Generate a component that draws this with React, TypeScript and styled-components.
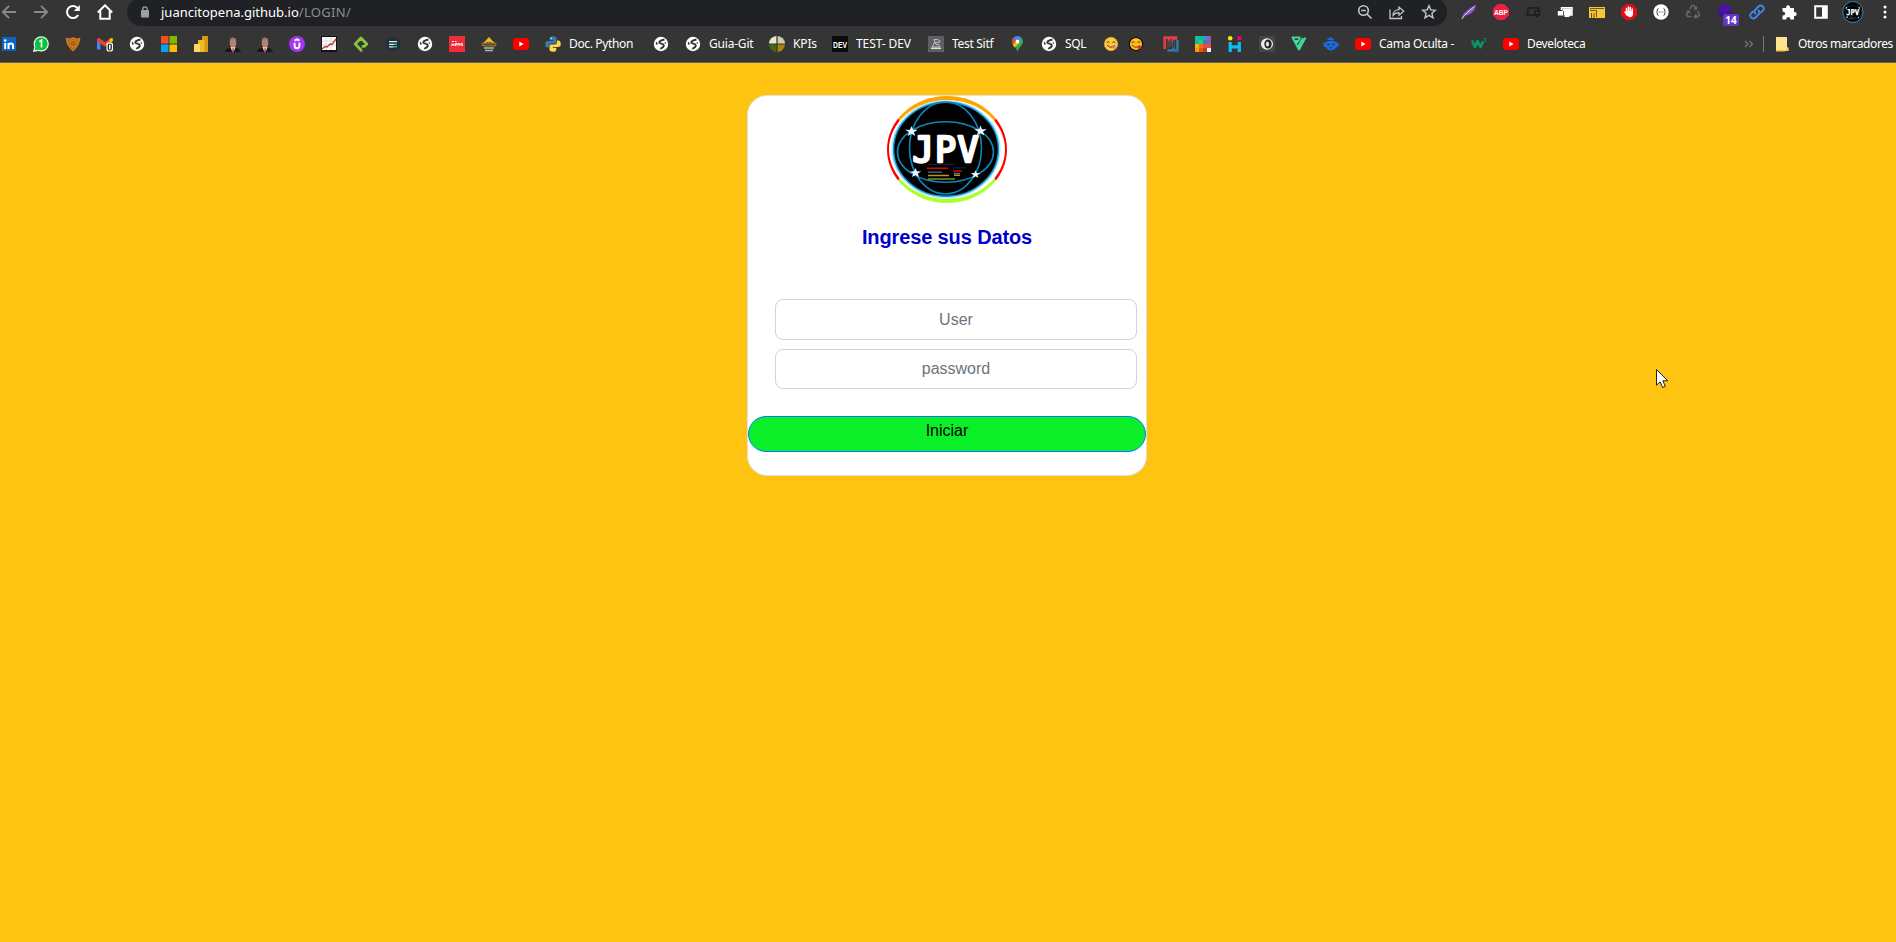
import React from 'react';
import styled, { createGlobalStyle } from 'styled-components';

const GlobalStyle = createGlobalStyle`
  * { box-sizing: border-box; }
  html, body { margin: 0; height: 100%; overflow: hidden; }
  body { background: #ffc312; font-family: "Liberation Sans", Arial, sans-serif; }
  #root { height: 100%; }
`;

const Page = styled.div`
  display: flex;
  flex-direction: column;
  height: 942px;
  width: 1896px;
  overflow: hidden;
  background: #ffc312;
`;

const Chrome = styled.header`
  height: 63px;
  background: #353535;
  border-bottom: 1px solid #636363;
  font-family: "Noto Sans", "Open Sans", sans-serif;
  color: #fff;
`;

const Toolbar = styled.div`
  display: flex;
  height: 26px;
`;

const NavButtons = styled.nav`
  display: flex;
  flex: none;
  align-items: center;
  gap: 16px;
  width: 127px;
  padding: 0 0 2px 1px;
`;

const AddressBar = styled.div`
  display: flex;
  flex: none;
  align-items: center;
  width: 1320px;
  height: 28px;
  margin-top: -2px;
  padding: 0 10px 0 14px;
  border-radius: 14px;
  background: #202124;
`;

const Url = styled.div`
  flex: 1;
  display: flex;
  margin-left: 12px;
  font-size: 13px;
  line-height: 20px;
  letter-spacing: 0;
  white-space: pre;
`;

const UrlPath = styled.span`
  color: #9aa0a6;
  letter-spacing: 0.3px;
  opacity: 0.85;
`;

const OmniActions = styled.div`
  display: flex;
  gap: 16px;
`;

const Extensions = styled.div`
  display: flex;
  flex: none;
  align-items: center;
  padding: 0 0 2px 6px;
`;

const ExtensionSlot = styled.div`
  position: relative;
  display: flex;
  flex: none;
  justify-content: center;
  width: 32px;
`;

const Badge = styled.span`
  position: absolute;
  left: 14px;
  top: 10px;
  width: 16px;
  height: 12px;
  border-radius: 2px;
  background: #6a35c4;
  color: #fff;
  font: bold 10px/12px "Open Sans", sans-serif;
  text-align: center;
`;

const Bookmarks = styled.div`
  display: flex;
  align-items: center;
  gap: 16px;
  height: 36px;
  padding: 0 2px 0 1px;
`;

const Bookmark = styled.a`
  display: flex;
  align-items: center;
  gap: 8px;
  flex: none;
`;

const Label = styled.span<{ $w: number; $ls?: number }>`
  width: ${(p) => p.$w}px;
  font-size: 12px;
  line-height: 16px;
  letter-spacing: ${(p) => p.$ls ?? -0.3}px;
  white-space: nowrap;
`;

const EmojiPair = styled.div`
  display: flex;
  gap: 9px;
  width: 44px;
`;

const Overflow = styled.div`
  display: flex;
  align-items: center;
  margin-left: auto;
  gap: 9px;
`;

const Separator = styled.i`
  width: 1px;
  height: 16px;
  background: #777;
`;

const FolderLink = styled.a`
  display: flex;
  align-items: center;
  gap: 7px;
  margin-left: 2px;
`;

const Main = styled.main`
  flex: 1;
  padding: 32px 0 0 747px;
`;

const Card = styled.form`
  display: flex;
  flex-direction: column;
  align-items: center;
  width: 400px;
  height: 381px;
  border: 1px solid #dfdfdf;
  border-radius: 20px;
  background: #fff;
`;

const LogoFrame = styled.div`
  width: 120px;
  height: 107px;
  border: solid;
  border-width: 4px 2px;
  border-color: orange red greenyellow;
  border-radius: 50%;
`;

const Title = styled.h1`
  margin: 22px 0 0;
  font-size: 20px;
  line-height: 24px;
  font-weight: bold;
  letter-spacing: -0.12px;
  color: #0000cd;
`;

const Fields = styled.div`
  display: flex;
  flex-direction: column;
  gap: 9px;
  width: 362px;
  margin: 50px 0 0 18px;
`;

const Field = styled.input<{ $h: number }>`
  height: ${(p) => p.$h}px;
  padding: 0;
  border: 1px solid #ced4da;
  border-radius: 8px;
  background: #fff;
  font: 16px "Liberation Sans", Arial, sans-serif;
  text-align: center;
  outline: none;
  &::placeholder { color: #6c757d; opacity: 1; }
`;

const Submit = styled.button`
  width: 398px;
  height: 36px;
  margin-top: 27px;
  padding: 0 0 6px;
  border: 1px solid #007bff;
  border-radius: 18px;
  background: #0bef28;
  color: #000;
  font: 16px/24px "Liberation Sans", Arial, sans-serif;
`;

const Pointer = styled.svg`
  position: absolute;
  left: 1655px;
  top: 368px;
`;

const Svg = styled.svg`
  display: block;
  flex: none;
`;

const Glyph = ({ size = 16, children }: { size?: number; children: React.ReactNode }) => (
  <Svg width={size} height={size} viewBox="0 0 16 16" fill="none">{children}</Svg>
);

const STARS: [number, number, number][] = [[911.5, 131.5, 6.5], [980.5, 131, 6.5], [915.5, 173, 6], [975.5, 174.5, 5]];

const starPath = (cx: number, cy: number, r: number) => {
  const pts = [];
  for (let i = 0; i < 10; i++) {
    const a = -Math.PI / 2 + (i * Math.PI) / 5;
    const k = i % 2 ? r * 0.4 : r;
    pts.push(`${(cx + Math.cos(a) * k).toFixed(1)} ${(cy + Math.sin(a) * k * 0.85).toFixed(1)}`);
  }
  return `M${pts.join('L')}Z`;
};

const Emblem = ({ w, h }: { w: number; h: number }) => (
  <Svg width={w} height={h} viewBox="889 100 116 99" preserveAspectRatio="none" fill="none">
    <ellipse cx="946" cy="149.300" rx="53.500" ry="48" fill="#000" stroke="#a8e6fb" strokeWidth="2" />
    <ellipse cx="946" cy="149.300" rx="52.400" ry="47" stroke="#0a9ad6" strokeWidth="1.400" />
    <g stroke="#0b86be" strokeWidth="1.600">
      <ellipse cx="945.500" cy="148" rx="36" ry="46" />
      <ellipse cx="945.500" cy="152" rx="48" ry="30.300" />
    </g>
    <text x="945.500" y="161.500" textAnchor="middle" fontFamily="DejaVu Sans Mono" fontSize="35" textLength="66" fill="#fff" stroke="#fff" strokeWidth="2.600" strokeLinejoin="round">JPV</text>
    {STARS.map(([x, y, r]) => <path key={x} d={starPath(x, y, r)} fill="#eef6ff" />)}
    <g strokeWidth="1.600">
      <path d="M928 164.500h27M953 167.800h12" stroke="#0c1c4c" strokeWidth="1.200" />
      <path d="M927 168.200h21M953 171h9" stroke="#dc0000" />
      <path d="M928 172.200h14M954 173.300h6" stroke="#4a6fae" strokeWidth="1.300" />
      <path d="M928 175.500h21M954 175.300h6" stroke="#c09410" />
      <path d="M928 179h27" stroke="#67912a" />
    </g>
  </Svg>
);

const Globe = () => (
  <Glyph>
    <circle cx="8" cy="8" r="7.200" fill="#fff" />
    <path d="M11.500 3.500C9 4 6.500 4.500 6.200 6.300c0 1.800 4.600 1 4.600 3.200C10.800 11.300 9 12 7.300 12.800" stroke="#353535" strokeWidth="1.900" />
    <path d="M3 5.500l1.700 1.800-.3 1.700-1.600-.7zM12.300 6l1 1.500-.8.500-1.200-1.200z" fill="#353535" />
  </Glyph>
);

const YouTube = () => (
  <Glyph>
    <rect y="2" width="16" height="12" rx="3" fill="#f00" />
    <path d="M6.300 5.600v4.800L10.600 8z" fill="#fff" />
  </Glyph>
);

const Businessman = () => (
  <Glyph>
    <path d="M0 16c0-2 2-3.400 4.500-4L8 11l3.500 1C14 12.600 16 14 16 16z" fill="#15171b" />
    <path d="M5.500 11h5L8.600 16H7.400z" fill="#e9e9ec" />
    <path d="M7.600 12h.9l.3 4H7.300z" fill="#a01d22" />
    <ellipse cx="8" cy="7" rx="3.200" ry="4.500" fill="#b9806a" />
    <path d="M4.700 6c-.3-3 1-4.500 3.300-4.500S11.600 3 11.300 6L10.500 4h-5z" fill="#8b827f" />
  </Glyph>
);

const Emoji = ({ outlined }: { outlined?: boolean }) => (
  <Glyph>
    <circle cx="8" cy="8" r="6.700" fill={outlined ? '#ffbf24' : '#fccb45'} stroke={outlined ? '#17130a' : '#f5b027'} strokeWidth={outlined ? 1.3 : 0.6} />
    <path d="M3.600 6.600q1.500-1.800 3 0M9.400 6.600q1.500-1.800 3 0" stroke="#5d3512" strokeWidth="1" />
    <path d="M4 9q4 4.500 8 0" stroke="#6b3d12" strokeWidth="1" />
    <ellipse cx="11.700" cy="11.600" rx="2" ry="1.700" fill={outlined ? '#f01f25' : '#f27bac'} />
  </Glyph>
);

const art = {
  linkedin: <Glyph><rect x="1" y="1" width="14" height="14" rx="1" fill="#0a66c2" /><circle cx="4.200" cy="4.500" r="1.300" fill="#fff" /><path d="M4.200 7v6M7.500 13V7M7.500 10c0-3.300 4.600-3.300 4.600 0v3" stroke="#fff" strokeWidth="2" /></Glyph>,
  whatsapp: <Glyph><circle cx="8.200" cy="7.800" r="7.600" fill="#fff" /><path d="M0 16l1.200-5 4 4z" fill="#fff" /><circle cx="8.200" cy="7.800" r="6.500" fill="#09c33e" /><path d="M1.500 14.500l1-4 3 3z" fill="#09c33e" /><path d="M6.300 5.700l2.200-1.500v7.300" stroke="#fff" strokeWidth="1.600" /></Glyph>,
  shield: <Glyph><path d="M.5 1.500L4 2.500 8 1l4 1.500 3.500-1C14.500 5 15.500 9 8 15.500.500 9 1.500 5 .500 1.500z" fill="#c9781d" /><path d="M4 4.500l4-1 4 1c0 3-.5 5.500-4 8.500C4.500 10 4 7.500 4 4.500z" stroke="#a8630f" strokeWidth=".7" /><circle cx="8" cy="7.500" r="1.600" stroke="#6e4516" strokeWidth=".9" /></Glyph>,
  gmail: <Glyph><path d="M0 4v9.500h3.500V7z" fill="#4285f4" /><path d="M0 5V3.500C0 2 2 1.500 3 2.500L8 6.300l5-3.800V7L8 10.700 0 5z" fill="#ea4335" /><path d="M12.500 3c1.500-1.500 3.500-1 3.500.5V5l-3.500 2.500z" fill="#fbbc04" /><rect x="9.500" y="6.500" width="6.500" height="9" rx="2" fill="#fff" /><rect x="11.300" y="8" width="2.900" height="6" rx="1.200" stroke="#111" strokeWidth="1.200" /></Glyph>,
  microsoft: <Glyph><path d="M0 0h7.500v7.500H0z" fill="#f25022" /><path d="M8.500 0H16v7.500H8.500z" fill="#7fba00" /><path d="M0 8.500h7.500V16H0z" fill="#00a4ef" /><path d="M8.500 8.500H16V16H8.500z" fill="#ffb900" /></Glyph>,
  powerbi: <Glyph><rect x="9" width="6" height="16" rx=".7" fill="#d89a13" /><rect x="5" y="4" width="6.500" height="12" rx=".7" fill="#efbb22" /><rect x="1" y="8" width="6" height="8" rx=".7" fill="#fadb62" /></Glyph>,
  udemy: <Glyph><circle cx="8" cy="8" r="8" fill="#a435f0" /><path d="M5.500 4.700L8 3.300l2.500 1.400M5.600 6.800v3.200c0 3 4.800 3 4.800 0V6.800" stroke="#fff" strokeWidth="1.900" /></Glyph>,
  chart: <Glyph><path d="M0 0h16v16H0z" fill="#111" /><path d="M1 1h14v13H1z" fill="#fafafa" /><path d="M1 5h14M1 9h14M5 1v13M10 1v13" stroke="#ccc" strokeWidth=".6" /><path d="M1 13l3-2.500 2 .5 3-3 2 .5 4-5.500" stroke="#b43a2e" strokeWidth="1.300" /></Glyph>,
  greenDiamond: <Glyph><path d="M8 14L2.200 8 8 2l5.800 6-2.300 2.300H8.800" stroke="#8cc63f" strokeWidth="2.700" strokeLinejoin="round" /><path d="M7 14.300h2.300" stroke="#8cc63f" strokeWidth="2.600" /></Glyph>,
  darkLines: <Glyph><circle cx="8" cy="8" r="7.500" fill="#22303b" /><path d="M4 5.700h8M4 8.300h5M4 10.800h4" stroke="#dfe9ea" strokeWidth="1.300" /><path d="M9 8.300h3M8 10.800h4" stroke="#21b78f" strokeWidth="1.400" /></Glyph>,
  redTile: <Glyph><path d="M0 0h16v16H0z" fill="#ef2c3c" /><path d="M3 5.500h2M6 5.500h1.500M3 10V7.500M5 10V7.500M3 8.700h2M6.500 10V7.500h1.600v1.300H6.500M9 10V7.500h1.600v2M12 10V7.500h1.300V10" stroke="#fff" strokeWidth=".9" /></Glyph>,
  hazard: <Glyph><path d="M8 1l6.500 7H1.500z" fill="#f0b920" /><path d="M5 6.500h6" stroke="#614c16" /><rect x="1" y="7" width="14" height="3" rx="1" fill="#554b38" stroke="#d5a82c" strokeWidth=".6" /><path d="M3 12h10M4 14.500h8" stroke="#b9b5a7" strokeWidth="1.500" /></Glyph>,
  python: <Glyph><path d="M8 .3C5 .3 4.700 1.500 4.700 2.500v1.800h3.500v.6H3C1 4.900.2 6.200.2 8.200s1 3.300 2.300 3.300H4V9.600C4 8.300 5 7.600 6.200 7.600h3.600c1 0 1.700-.7 1.700-1.700V2.500C11.500 1 10 .3 8 .3z" fill="#3d7aab" /><path d="M8 15.700c3 0 3.300-1.200 3.300-2.200v-1.800H7.800v-.6H13c2 0 2.800-1.300 2.800-3.300s-1-3.300-2.300-3.300H12v1.900c0 1.300-1 2-2.200 2H6.200c-1 0-1.700.7-1.700 1.700v3.400c0 1.500 1.500 2.200 3.500 2.200z" fill="#ffd84a" /><circle cx="6.300" cy="2.400" r=".7" fill="#fff" /></Glyph>,
  kpis: <Glyph><path d="M7.400 8.600H0a8 8 0 007.400 7.400z" fill="#3f6b10" /><path d="M8.600 8.600H16A8 8 0 018.600 16z" fill="#ad7f08" /><path d="M7.400 7.400H0A8 8 0 017.400 0z" fill="#e9e8cf" /><path d="M8.600 7.400H16A8 8 0 008.600 0z" fill="#cfcea9" /></Glyph>,
  dev: <Glyph><path d="M0 0h16v16H0z" fill="#0a0a0a" /><text x="1" y="11.500" fontFamily="Liberation Sans" fontWeight="bold" fontSize="9.500" textLength="14" lengthAdjust="spacingAndGlyphs" fill="#fff">DEV</text></Glyph>,
  test: <Glyph><path d="M0 0h16v16H0z" fill="#5f6063" /><path d="M3 12.300h10" stroke="#ddd" strokeWidth="1.400" /><path d="M4 11l3-5 1.500 3L10 8l2 3zM6 3.500h3.500L12 5l-1 2-2-1-2 1z" stroke="#c8c8c8" strokeWidth=".9" /></Glyph>,
  maps: <Glyph><path d="M8.500.2c3.300 0 5.500 2.500 5.500 5.300C14 9 9.800 11 8.500 16 7.500 11 3 9 3 5.500 3 2.500 5.500.2 8.500.2z" fill="#34a853" /><path d="M4.200 2C6 0 10.500-.5 12.600 2L8.500 6z" fill="#4285f4" /><path d="M4.200 2L8 5 4.200 9.200C2.700 7 2.500 4 4.200 2z" fill="#ea4335" /><path d="M10 7l-4.500 4.500L3.800 9 7 5.500z" fill="#fbbc04" /><circle cx="8.500" cy="5.500" r="1.900" fill="#fff" /></Glyph>,
  doubleH: <Glyph><path d="M1.700 13V1.700H13V4M6 3v8M10 3v4" stroke="#df3d49" strokeWidth="2.700" /><path d="M14.400 4v10.300H4.500M6 8h4.500v5" stroke="#2d779f" strokeWidth="2.700" /><path d="M6 4.500V12M6 8h4.500M10.500 4.500V12" stroke="#353b45" strokeWidth="1.500" /></Glyph>,
  palette: <Glyph>{['#1abc9c', '#0fc07a', '#3498db', '#9b59b6', '#14b8a0', '#2ecc71', '#2f80c0', '#8e5bb0', '#f1b40f', '#f06c22', '#e74c3c', '#e0504a', '#f39c12', '#e55a00', '#c0392b', '#ecf0f1'].map((c, i) => <rect key={c} x={(i % 4) * 4} y={Math.floor(i / 4) * 4} width="4" height="4" fill={c} />)}</Glyph>,
  people: <Glyph><circle cx="3.200" cy="2.300" r="2.300" fill="#f8e800" /><circle cx="12.300" cy="2.300" r="2.300" fill="#ee007f" /><path d="M3.200 6v10M12.300 6v10M3 10.800h9" stroke="#10bdf2" strokeWidth="3.200" /></Glyph>,
  eye: <Glyph><rect width="16" height="16" rx="2" fill="#464646" /><ellipse cx="8" cy="8" rx="6" ry="5.800" fill="#eee" /><ellipse cx="9" cy="8" rx="3.700" ry="4.600" fill="#262626" /><ellipse cx="8.500" cy="8" rx="1.700" ry="2.600" fill="#ddd" /></Glyph>,
  flutter: <Glyph><path d="M9.500 1.500H1.500L8 13.500 14.500 1.500M3.500 5H8M5 8l4-5.500M8 13V9l4-7" stroke="#3ddc97" strokeWidth="1.900" strokeLinejoin="round" /></Glyph>,
  robot: <Glyph><path d="M2 7c2-3 10-3 12 0l1.500-1v4L13 11.500c-2 4-8 4-10 0L.5 10V6z" fill="#176ce0" /><path d="M4.500 3.500L7 2.500v1.500M8.500 4L7.500 1M10 2.300v2" stroke="#176ce0" strokeWidth="1.600" /><ellipse cx="5.500" cy="8.500" rx="1.400" ry="1" fill="#27405e" /><ellipse cx="10.500" cy="8.500" rx="1.400" ry="1" fill="#27405e" /><path d="M6 11.800h4" stroke="#27405e" /></Glyph>,
  w3: <Glyph><path d="M1 4.500l3 6.500 2.500-6 3 6 2.500-5.500" stroke="#059862" strokeWidth="2.700" strokeLinejoin="round" /><path d="M12.800 2.600h2.200l-1.300 1.500c1.600 0 1.600 2.200-.9 1.800" stroke="#059862" strokeWidth=".9" /></Glyph>,
};

const BOOKMARKS: { icon: React.ReactNode; label?: string; w?: number; ls?: number }[] = [
  { icon: art.linkedin }, { icon: art.whatsapp }, { icon: art.shield }, { icon: art.gmail }, { icon: <Globe /> },
  { icon: art.microsoft }, { icon: art.powerbi }, { icon: <Businessman /> }, { icon: <Businessman /> }, { icon: art.udemy },
  { icon: art.chart }, { icon: art.greenDiamond }, { icon: art.darkLines }, { icon: <Globe /> }, { icon: art.redTile },
  { icon: art.hazard }, { icon: <YouTube /> },
  { icon: art.python, label: 'Doc. Python', w: 68, ls: -0.35 }, { icon: <Globe /> },
  { icon: <Globe />, label: 'Guia-Git', w: 44, ls: -0.2 }, { icon: art.kpis, label: 'KPIs', w: 23, ls: -0.15 },
  { icon: art.dev, label: 'TEST- DEV', w: 56, ls: -0.1 }, { icon: art.test, label: 'Test Sitf', w: 41 },
  { icon: art.maps }, { icon: <Globe />, label: 'SQL', w: 22 },
  { icon: <EmojiPair><Emoji /><Emoji outlined /></EmojiPair> },
  { icon: art.doubleH }, { icon: art.palette }, { icon: art.people }, { icon: art.eye }, { icon: art.flutter }, { icon: art.robot },
  { icon: <YouTube />, label: 'Cama Oculta -', w: 76 }, { icon: art.w3 }, { icon: <YouTube />, label: 'Develoteca', w: 60, ls: -0.38 },
];

const EXTENSIONS: React.ReactNode[] = [
  <Glyph><path d="M.5 15.500C1 9 6 6 15 .5 14 6 12 10 3 12z" fill="#9057cf" /><path d="M1 15C4 10 8 7 13.500 2.500" stroke="#dcc3f4" /></Glyph>,
  <Glyph><path d="M4.700 0h6.600L16 4.700v6.600L11.300 16H4.700L0 11.300V4.700z" fill="#ed1e45" /><text x="1" y="11" fontFamily="Liberation Sans" fontWeight="bold" fontSize="8" textLength="14" lengthAdjust="spacingAndGlyphs" fill="#fff">ABP</text></Glyph>,
  <Glyph><path d="M3 9V4h10.500v3M1.500 11h8.500M10 7h4.500v4H10zM2 11V8.500M11 12.500h2" stroke="#1b1b1b" strokeWidth="1.300" /></Glyph>,
  <Glyph><path d="M4.500 6V3.700H15V11h-4" stroke="#fff" strokeWidth="1.500" /><path d="M5.500 4.500h9v6.500h-9z" fill="#fff" /><path d="M.8 7h5.500v4.500H.8zM7.500 11h5v2h-5z" fill="#fff" /><path d="M6.500 7v4" stroke="#353535" strokeWidth=".8" /></Glyph>,
  <Glyph><path d="M0 3h16v11H0z" fill="#f5c83c" /><path d="M1 6.500h6.500V13M2.500 9v5M5 9v5M1 4.500h14" stroke="#6b571a" strokeWidth="1" /></Glyph>,
  <Glyph><path d="M4.700 0h6.600L16 4.700v6.600L11.300 16H4.700L0 11.300V4.700z" fill="#e40d13" /><path d="M5.500 8V4.500M7.400 8V3M9.300 8V3.500M11.200 8V5M4 8l2 3" stroke="#fff" strokeWidth="1.500" strokeLinecap="round" /><path d="M5 7h7v3c0 4-5 4-6 1z" fill="#fff" /></Glyph>,
  <Glyph><circle cx="8" cy="8" r="7.700" fill="#fff" /><path d="M5.500 4.500c-2 0-.5 3-2 3.500 1.500.5 0 3.500 2 3.500M10.500 4.500c2 0 .5 3 2 3.500-1.500.5 0 3.500-2 3.500M6 8h.8M7.700 8h.8M9.400 8h.8" stroke="#444" /></Glyph>,
  <Glyph><path d="M5 5l2-3.500h2L11 5M9 5h2.500V2.500M12.500 7l2 3.500-1 2H10M11.500 10.500l-2 2 2 2M6.500 12.500h-4l-1-2 2-3.500M1.500 7.500L4 7l.8 2.500" stroke="#696969" strokeWidth="1.500" /></Glyph>,
  <React.Fragment><Glyph><path d="M8 0l8 5-8 5-8-5z" fill="#4b0eb0" /><path d="M1.500 7L8 11l6.500-4v4L8 14l-6.500-3z" fill="#38108b" /></Glyph><Badge>14</Badge></React.Fragment>,
  <Glyph><path d="M6.500 9.500c-1.500-1.500-1-3 0-4l3-3c3-2.500 7 1 4.500 4l-2 2M9.500 6.500c1.500 1.500 1 3 0 4l-3 3c-3 2.500-7-1-4.500-4l2-2" stroke="#4786f1" strokeWidth="1.800" strokeLinecap="round" /></Glyph>,
  <Glyph><path d="M1.500 4H5.300C4.300.2 9.800.2 9 4h4v4c3.500-.7 3.500 4.500 0 4v3.500H9.300c.3-3.500-4.300-3.500-4 0H1.500v-4c3.500.3 3.500-4.300 0-4z" fill="#fff" /></Glyph>,
  <Glyph><path d="M2.200 2.200h11.600v11.600H2.200z" stroke="#fff" strokeWidth="2" /><path d="M9 2h5v12H9z" fill="#fff" /></Glyph>,
  <Emblem w={22} h={22} />,
  <Glyph><circle cx="8" cy="3" r="1.500" fill="#fff" /><circle cx="8" cy="8" r="1.500" fill="#fff" /><circle cx="8" cy="13" r="1.500" fill="#fff" /></Glyph>,
];

const App = () => (
  <Page>
    <GlobalStyle />
    <Chrome>
      <Toolbar>
        <NavButtons>
          <Glyph><path d="M15 8H2M8 1.800L1.800 8 8 14.200" stroke="#8a8a8a" strokeWidth="1.800" /></Glyph>
          <Glyph><path d="M1 8h13M8 1.800L14.200 8 8 14.200" stroke="#8a8a8a" strokeWidth="1.800" /></Glyph>
          <Glyph><path d="M13.200 11A6 6 0 1113 4.700" stroke="#fff" strokeWidth="2" /><path d="M14.800 1v6H8.800z" fill="#fff" /></Glyph>
          <Glyph><path d="M.8 8.500L8 1.300l7.200 7.200M3.300 7v7.800h9.400V7" stroke="#fff" strokeWidth="2" /></Glyph>
        </NavButtons>
        <AddressBar>
          <Svg width="8" height="12" viewBox="0 0 8 12" fill="none"><rect y="4" width="8" height="7.500" rx="1" fill="#9aa0a6" /><path d="M1.800 5V3a2.200 2.200 0 014.400 0v2" stroke="#9aa0a6" strokeWidth="1.300" /></Svg>
          <Url><span>juancitopena.github.io</span><UrlPath>/LOGIN/</UrlPath></Url>
          <OmniActions>
            <Glyph><circle cx="6.500" cy="6.500" r="4.800" stroke="#c4c6c8" strokeWidth="1.600" /><path d="M10 10l4.500 4.500M4.200 6.500h4.600" stroke="#c4c6c8" strokeWidth="1.600" /></Glyph>
            <Glyph><path d="M1 5.500v9h11.500V12" stroke="#c4c6c8" strokeWidth="1.300" /><path d="M4 11.500c0-4 2.500-5.800 6-5.800V3l4.800 4.200L10 11.300V8.700c-3 0-4.500.8-6 2.800z" stroke="#c4c6c8" strokeWidth="1.200" /></Glyph>
            <Glyph><path d="M8 1.700l1.800 4.200 4.600.4-3.500 3 1.100 4.500L8 11.400l-4 2.400 1.100-4.500-3.500-3 4.600-.4z" stroke="#c4c6c8" strokeWidth="1.400" /></Glyph>
          </OmniActions>
        </AddressBar>
        <Extensions>{EXTENSIONS.map((e, i) => <ExtensionSlot key={i}>{e}</ExtensionSlot>)}</Extensions>
      </Toolbar>
      <Bookmarks>
        {BOOKMARKS.map((b, i) => (
          <Bookmark key={i}>{b.icon}{b.label && <Label $w={b.w!} $ls={b.ls}>{b.label}</Label>}</Bookmark>
        ))}
        <Overflow>
          <Svg width="10" height="8" viewBox="0 0 10 8" fill="none"><path d="M1 1l3 3-3 3M5.500 1l3 3-3 3" stroke="#777" strokeWidth="1.200" /></Svg>
          <Separator />
          <FolderLink>
            <Svg width="16" height="16" viewBox="0 0 16 16"><path d="M1 1h11v10l1.500 1v3H1z" fill="#ffe48f" /><path d="M1 14h9v1.500H1zM12 11l1.500 1v3H11z" fill="#f0c44f" /></Svg>
            <Label $w={96} $ls={-0.42}>Otros marcadores</Label>
          </FolderLink>
        </Overflow>
      </Bookmarks>
    </Chrome>
    <Main>
      <Card onSubmit={(e) => e.preventDefault()}>
        <LogoFrame><Emblem w={116} h={99} /></LogoFrame>
        <Title>Ingrese sus Datos</Title>
        <Fields>
          <Field $h={41} type="text" placeholder="User" />
          <Field $h={40} type="password" placeholder="password" />
        </Fields>
        <Submit type="submit">Iniciar</Submit>
      </Card>
    </Main>
    <Pointer width="14" height="22" viewBox="0 0 14 22">
      <path d="M1.500 1.500v15.700l3.600-3.400 2.600 5.700 2.600-1.200-2.500-5.500h5z" fill="#fff" stroke="#222" strokeWidth="1" />
    </Pointer>
  </Page>
);

export default App;
